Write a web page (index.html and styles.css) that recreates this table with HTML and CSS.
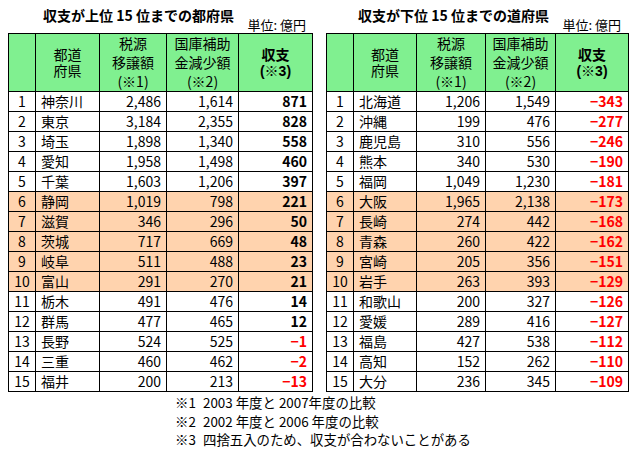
FILE: index.html
```html
<!DOCTYPE html>
<html lang="ja">
<head>
<meta charset="utf-8">
<link rel="stylesheet" href="styles.css">
</head>
<body>
<div class="page">
  <div class="tables">
    <section class="block block-left">
      <div class="caption">
        <h2 class="title">収支が上位 15 位までの都府県</h2>
        <span class="unit">単位: 億円</span>
      </div>
      <table class="grid grid-left">
        <thead>
          <tr>
            <th class="c-rank"></th>
            <th class="c-name two">都道<br>府県</th>
            <th class="c-num three">税源<br>移譲額<br>(※1)</th>
            <th class="c-num three">国庫補助<br>金減少額<br>(※2)</th>
            <th class="c-bal two strong">収支<br>(※3)</th>
          </tr>
        </thead>
        <tbody>
          <tr><td class="r">1</td><td class="n">神奈川</td><td class="v">2,486</td><td class="v">1,614</td><td class="b">871</td></tr>
          <tr><td class="r">2</td><td class="n">東京</td><td class="v">3,184</td><td class="v">2,355</td><td class="b">828</td></tr>
          <tr><td class="r">3</td><td class="n">埼玉</td><td class="v">1,898</td><td class="v">1,340</td><td class="b">558</td></tr>
          <tr><td class="r">4</td><td class="n">愛知</td><td class="v">1,958</td><td class="v">1,498</td><td class="b">460</td></tr>
          <tr><td class="r">5</td><td class="n">千葉</td><td class="v">1,603</td><td class="v">1,206</td><td class="b">397</td></tr>
          <tr class="hl"><td class="r">6</td><td class="n">静岡</td><td class="v">1,019</td><td class="v">798</td><td class="b">221</td></tr>
          <tr class="hl"><td class="r">7</td><td class="n">滋賀</td><td class="v">346</td><td class="v">296</td><td class="b">50</td></tr>
          <tr class="hl"><td class="r">8</td><td class="n">茨城</td><td class="v">717</td><td class="v">669</td><td class="b">48</td></tr>
          <tr class="hl"><td class="r">9</td><td class="n">岐阜</td><td class="v">511</td><td class="v">488</td><td class="b">23</td></tr>
          <tr class="hl"><td class="r">10</td><td class="n">富山</td><td class="v">291</td><td class="v">270</td><td class="b">21</td></tr>
          <tr><td class="r">11</td><td class="n">栃木</td><td class="v">491</td><td class="v">476</td><td class="b">14</td></tr>
          <tr><td class="r">12</td><td class="n">群馬</td><td class="v">477</td><td class="v">465</td><td class="b">12</td></tr>
          <tr><td class="r">13</td><td class="n">長野</td><td class="v">524</td><td class="v">525</td><td class="b neg">−1</td></tr>
          <tr><td class="r">14</td><td class="n">三重</td><td class="v">460</td><td class="v">462</td><td class="b neg">−2</td></tr>
          <tr><td class="r">15</td><td class="n">福井</td><td class="v">200</td><td class="v">213</td><td class="b neg">−13</td></tr>
        </tbody>
      </table>
    </section>
    <section class="block block-right">
      <div class="caption">
        <h2 class="title">収支が下位 15 位までの道府県</h2>
        <span class="unit">単位: 億円</span>
      </div>
      <table class="grid grid-right">
        <thead>
          <tr>
            <th class="c-rank"></th>
            <th class="c-name two">都道<br>府県</th>
            <th class="c-num three">税源<br>移譲額<br>(※1)</th>
            <th class="c-num2 three">国庫補助<br>金減少額<br>(※2)</th>
            <th class="c-bal two strong">収支<br>(※3)</th>
          </tr>
        </thead>
        <tbody>
          <tr><td class="r">1</td><td class="n">北海道</td><td class="v">1,206</td><td class="v">1,549</td><td class="b neg">−343</td></tr>
          <tr><td class="r">2</td><td class="n">沖縄</td><td class="v">199</td><td class="v">476</td><td class="b neg">−277</td></tr>
          <tr><td class="r">3</td><td class="n">鹿児島</td><td class="v">310</td><td class="v">556</td><td class="b neg">−246</td></tr>
          <tr><td class="r">4</td><td class="n">熊本</td><td class="v">340</td><td class="v">530</td><td class="b neg">−190</td></tr>
          <tr><td class="r">5</td><td class="n">福岡</td><td class="v">1,049</td><td class="v">1,230</td><td class="b neg">−181</td></tr>
          <tr class="hl"><td class="r">6</td><td class="n">大阪</td><td class="v">1,965</td><td class="v">2,138</td><td class="b neg">−173</td></tr>
          <tr class="hl"><td class="r">7</td><td class="n">長崎</td><td class="v">274</td><td class="v">442</td><td class="b neg">−168</td></tr>
          <tr class="hl"><td class="r">8</td><td class="n">青森</td><td class="v">260</td><td class="v">422</td><td class="b neg">−162</td></tr>
          <tr class="hl"><td class="r">9</td><td class="n">宮崎</td><td class="v">205</td><td class="v">356</td><td class="b neg">−151</td></tr>
          <tr class="hl"><td class="r">10</td><td class="n">岩手</td><td class="v">263</td><td class="v">393</td><td class="b neg">−129</td></tr>
          <tr><td class="r">11</td><td class="n">和歌山</td><td class="v">200</td><td class="v">327</td><td class="b neg">−126</td></tr>
          <tr><td class="r">12</td><td class="n">愛媛</td><td class="v">289</td><td class="v">416</td><td class="b neg">−127</td></tr>
          <tr><td class="r">13</td><td class="n">福島</td><td class="v">427</td><td class="v">538</td><td class="b neg">−112</td></tr>
          <tr><td class="r">14</td><td class="n">高知</td><td class="v">152</td><td class="v">262</td><td class="b neg">−110</td></tr>
          <tr><td class="r">15</td><td class="n">大分</td><td class="v">236</td><td class="v">345</td><td class="b neg">−109</td></tr>
        </tbody>
      </table>
    </section>
  </div>
  <ul class="notes">
    <li><span class="mark">※1</span><span>2003 年度と 2007年度の比較</span></li>
    <li><span class="mark">※2</span><span>2002 年度と 2006 年度の比較</span></li>
    <li><span class="mark">※3</span><span>四捨五入のため、収支が合わないことがある</span></li>
  </ul>
</div>
</body>
</html>
```
FILE: styles.css
```css
* { box-sizing: border-box; }
html, body { margin: 0; padding: 0; background: #fff; }
body {
  font-family: "Noto Sans CJK JP", "Noto Sans", sans-serif;
  color: #000;
  font-size: 14px;
}
.page { width: 638px; height: 452px; }
.tables {
  display: flex;
  gap: 13px;
  padding-left: 8px;
}
.block { display: flex; flex-direction: column; }
.caption {
  height: 33px;
  display: flex;
  justify-content: space-between;
  align-items: flex-end;
}
.block-left .caption { padding: 0 7px 0 35px; }
.block-right .caption { padding: 0 8px 0 32px; }
.title {
  margin: 0 0 8px 0;
  font-size: 14px;
  font-weight: bold;
  line-height: 19px;
}
.unit {
  font-size: 13px;
  line-height: 17px;
  margin-bottom: 0;
}
.grid {
  border-collapse: separate;
  border-spacing: 1px;
  background: #000;
  table-layout: fixed;
}
.grid-left { width: 305px; }
.grid-right { width: 303px; }
.grid th, .grid td {
  padding: 0;
  background: #fff;
  font-weight: normal;
  white-space: nowrap;
  overflow: hidden;
}
.grid th {
  height: 57px;
  background: #80f090;
  text-align: center;
  vertical-align: middle;
}
.grid th.two {
  font-family: "Liberation Sans", "Noto Sans CJK JP", sans-serif;
  line-height: 16px;
}
.grid th.three { line-height: 19px; }
.grid th.strong { font-weight: bold; }
.grid-left .c-rank { width: 26px; }
.grid-left .c-name { width: 63px; }
.grid-left .c-num { width: 66px; }
.grid-left .c-num + .c-num { width: 71px; }
.grid-left .c-bal { width: 73px; }
.grid-right .c-rank { width: 26px; }
.grid-right .c-name { width: 62px; }
.grid-right .c-num { width: 68px; }
.grid-right .c-num2 { width: 69px; }
.grid-right .c-bal { width: 72px; }
.grid td {
  height: 19px;
  line-height: 19px;
}
.grid tr.hl td { background: #ffd3ae; }
.grid td.r { text-align: center; }
.grid td.n { text-align: left; padding-left: 5px; }
.grid td.v { text-align: right; padding-right: 5px; }
.grid td.b { text-align: right; padding-right: 5px; font-weight: bold; }
.grid td.neg { color: #ff0000; }
.notes {
  list-style: none;
  margin: 1px 0 0 0;
  padding: 0 0 0 175px;
  font-size: 13.4px;
  line-height: 18.5px;
}
.notes li { display: flex; }
.notes .mark { width: 28px; flex: none; }
```
